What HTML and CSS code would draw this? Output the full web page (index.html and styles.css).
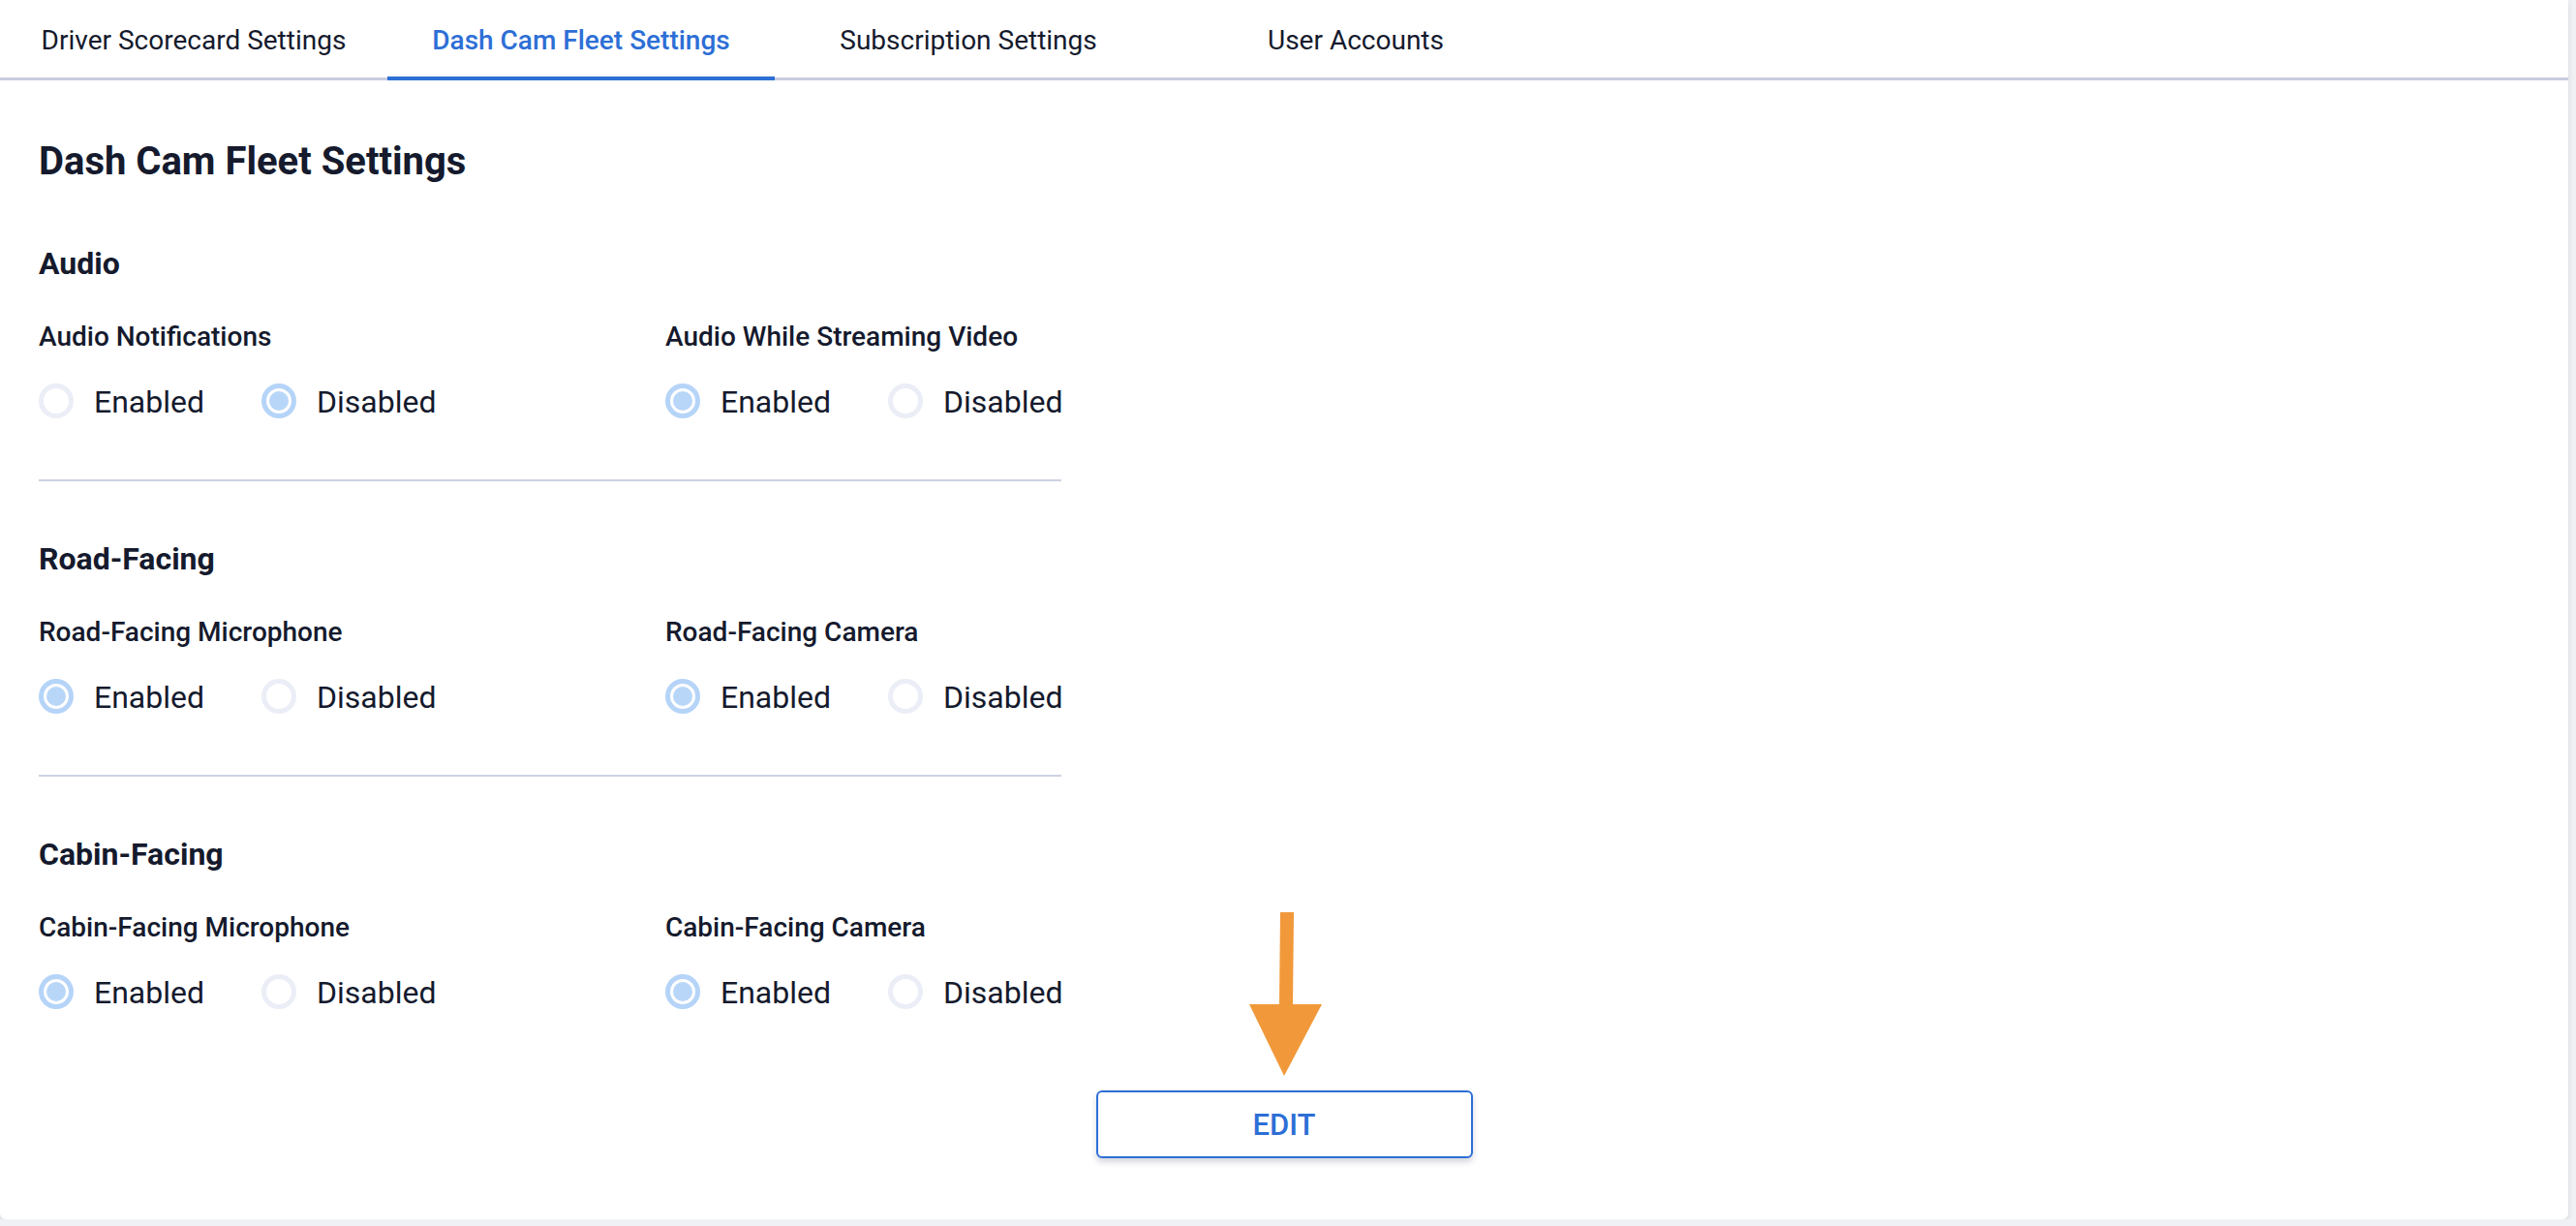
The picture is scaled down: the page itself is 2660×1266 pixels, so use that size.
FILE: index.html
```html
<!DOCTYPE html>
<html>
	<head>
		<meta charset="utf-8" />
		<title>Dash Cam Fleet Settings</title>
		<link rel="stylesheet" href="styles.css">
	</head>
	<body>
		<div class="card">
			<!-- tabs -->
			<div class="tabs">
				<div class="tab">Driver Scorecard Settings</div>
				<div class="tab active">Dash Cam Fleet Settings</div>
				<div class="tab">Subscription Settings</div>
				<div class="tab">User Accounts</div>
			</div>

			<div class="content">
				<h1 class="page_title">Dash Cam Fleet Settings</h1>

				<div class="section">
					<h2 class="section_title">Audio</h2>
					<div class="fields">
						<div class="field">
							<div class="field_label">Audio Notifications</div>
							<div class="radios">
								<div class="radio"><span class="dot"></span>Enabled</div>
								<div class="radio"><span class="dot checked"></span>Disabled</div>
							</div>
						</div>
						<div class="field">
							<div class="field_label">Audio While Streaming Video</div>
							<div class="radios">
								<div class="radio"><span class="dot checked"></span>Enabled</div>
								<div class="radio"><span class="dot"></span>Disabled</div>
							</div>
						</div>
					</div>
				</div>

				<div class="section">
					<h2 class="section_title">Road-Facing</h2>
					<div class="fields">
						<div class="field">
							<div class="field_label">Road-Facing Microphone</div>
							<div class="radios">
								<div class="radio"><span class="dot checked"></span>Enabled</div>
								<div class="radio"><span class="dot"></span>Disabled</div>
							</div>
						</div>
						<div class="field">
							<div class="field_label">Road-Facing Camera</div>
							<div class="radios">
								<div class="radio"><span class="dot checked"></span>Enabled</div>
								<div class="radio"><span class="dot"></span>Disabled</div>
							</div>
						</div>
					</div>
				</div>

				<div class="section last">
					<h2 class="section_title">Cabin-Facing</h2>
					<div class="fields">
						<div class="field">
							<div class="field_label">Cabin-Facing Microphone</div>
							<div class="radios">
								<div class="radio"><span class="dot checked"></span>Enabled</div>
								<div class="radio"><span class="dot"></span>Disabled</div>
							</div>
						</div>
						<div class="field">
							<div class="field_label">Cabin-Facing Camera</div>
							<div class="radios">
								<div class="radio"><span class="dot checked"></span>Enabled</div>
								<div class="radio"><span class="dot"></span>Disabled</div>
							</div>
						</div>
					</div>
				</div>

				<div class="actions">
					<button class="btn_edit">EDIT</button>
				</div>
			</div>

			<!-- annotation arrow over the page -->
			<svg class="arrow" width="80" height="175" viewBox="0 0 80 175">
				<polygon points="34,2 48,2 47,97 33,97" fill="#f1993a" />
				<polygon points="2,97 77,97 38,171" fill="#f1993a" />
			</svg>
		</div>
	</body>
</html>
```

FILE: styles.css
```css
html, body {
	margin: 0;
	padding: 0;
}
body {
	background-color: #f0f1f5;
	font-family: Roboto, "Liberation Sans", sans-serif;
	color: #151a2d;
}
.card {
	position: relative;
	width: 2652px;
	height: 1259px;
	background-color: #fff;
	border-radius: 0 0 6px 6px;
	box-shadow: 0 3px 6px rgba(20, 30, 60, .12);
}

/** tabs **/
.tabs {
	display: flex;
	border-bottom: 3px solid #c8cde0;
}
.tab {
	width: 400px;
	height: 83px;
	box-sizing: border-box;
	margin-bottom: -3px;
	padding-top: 26px;
	font-size: 28px;
	line-height: 32px;
	text-align: center;
	border-bottom: 4px solid transparent;
}
.tab.active {
	color: #2d6fd6;
	font-weight: 500;
	border-bottom-color: #2d6fd6;
}

/** content **/
.content {
	padding: 0 40px;
}
.page_title {
	margin: 60px 0 0;
	font-size: 40px;
	line-height: 48px;
	font-weight: 700;
}
.section {
	width: 1056px;
	padding-bottom: 63px;
	border-bottom: 2px solid #cdd2e2;
}
.section.last {
	border-bottom: none;
	padding-bottom: 0;
}
.section_title {
	margin: 60px 0 0;
	font-size: 32px;
	line-height: 40px;
	font-weight: 700;
}
.section:first-of-type .section_title {
	margin-top: 61px;
}
.fields {
	display: grid;
	grid-template-columns: 647px auto;
	margin-top: 38px;
}
.field_label {
	font-size: 28px;
	line-height: 36px;
	font-weight: 500;
}
.radios {
	display: flex;
	margin-top: 30px;
}
.radio {
	display: flex;
	align-items: center;
	width: 230px;
	height: 36px;
	font-size: 32px;
	line-height: 36px;
	padding-top: 2px;
	box-sizing: border-box;
}
.dot {
	width: 36px;
	height: 36px;
	margin-top: -2px;
	margin-right: 21px;
	box-sizing: border-box;
	border: 5px solid #ebeef6;
	border-radius: 50%;
	flex-shrink: 0;
}
.dot.checked {
	border-color: #b5d4f8;
	background-color: #b8d6f8;
	background-clip: content-box;
	padding: 3px;
}

/** button **/
.actions {
	display: flex;
	justify-content: center;
	margin-top: 84px;
}
.btn_edit {
	width: 389px;
	height: 70px;
	background-color: #fff;
	border: 2.5px solid #2d6fd6;
	border-radius: 6px;
	color: #2d6fd6;
	font-family: Roboto, "Liberation Sans", sans-serif;
	font-size: 31px;
	font-weight: 500;
	box-shadow: 0 4px 6px rgba(20, 30, 60, .18);
	cursor: pointer;
}

.arrow {
	position: absolute;
	left: 1288px;
	top: 940px;
}
```
